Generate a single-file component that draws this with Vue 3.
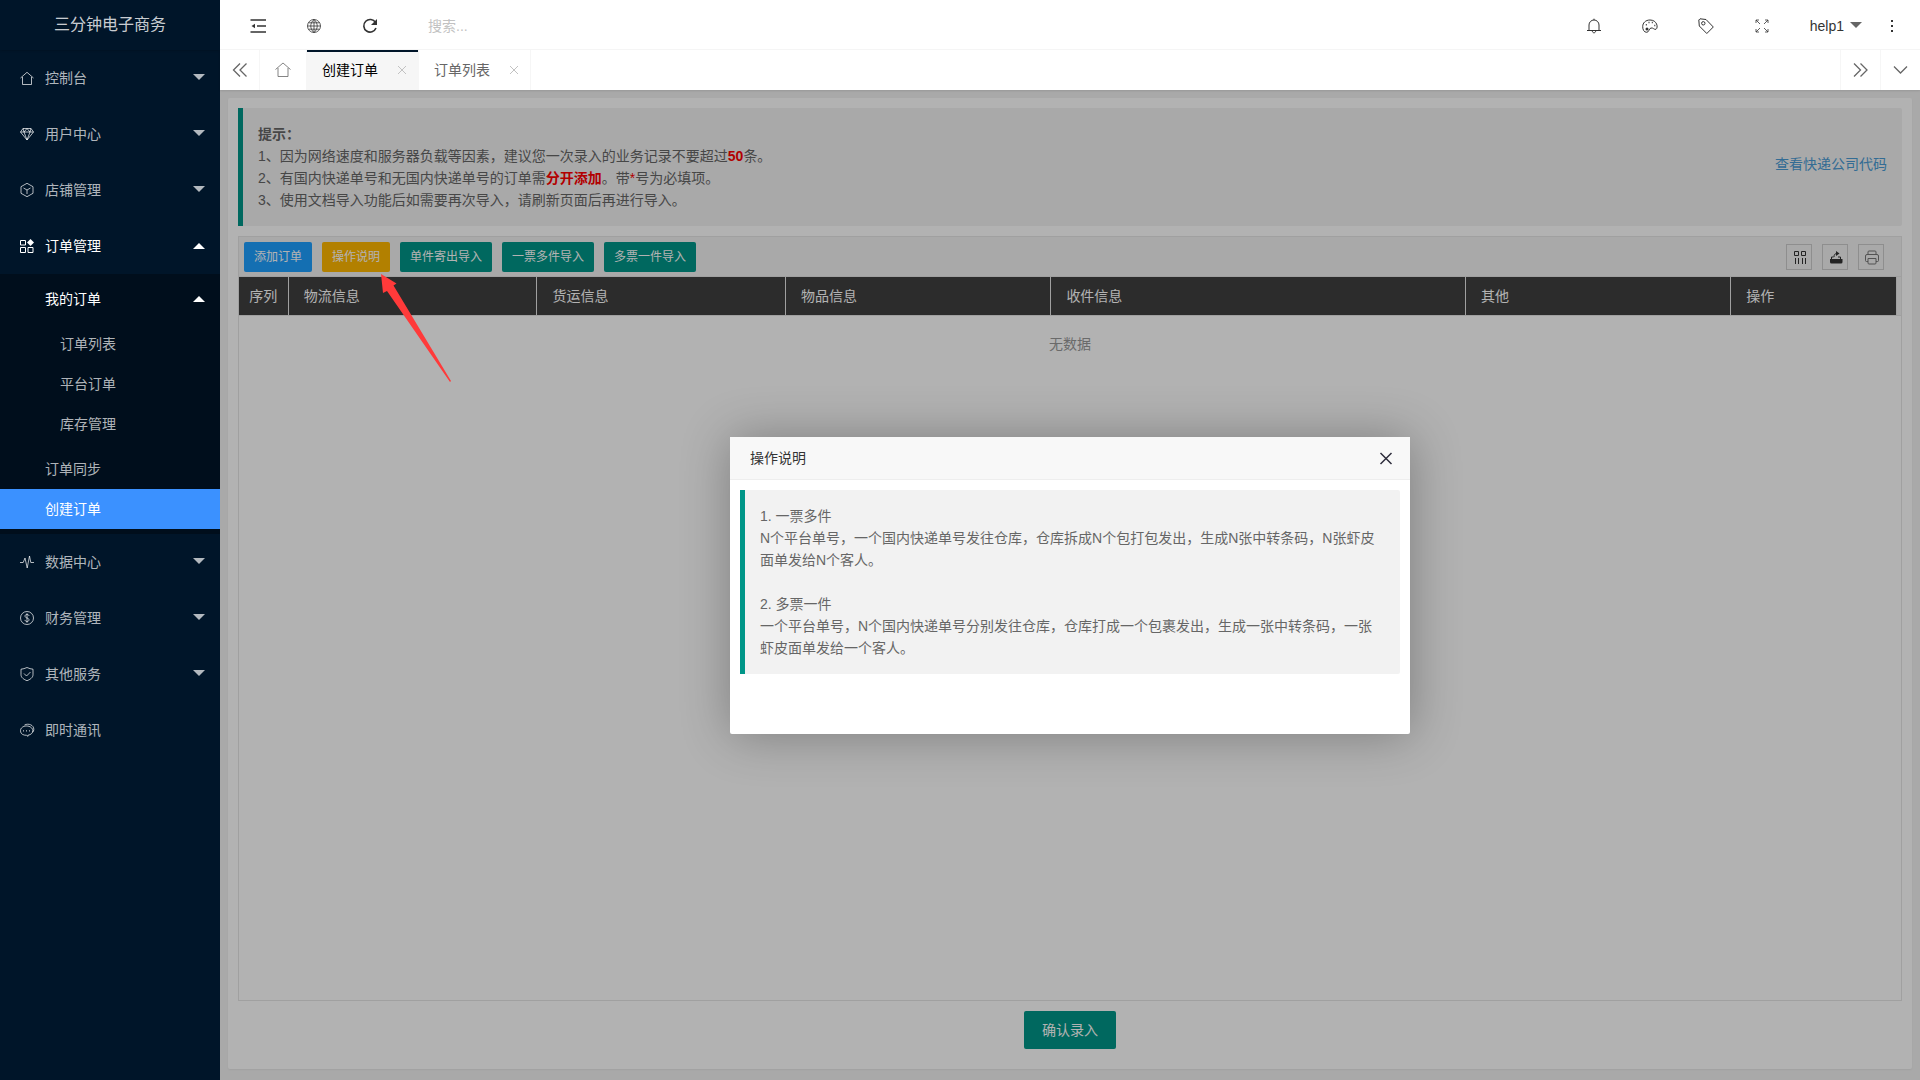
<script setup>
import { ref } from 'vue';

const menu = ref([
  { title: '控制台', icon: 'home', children: true },
  { title: '用户中心', icon: 'diamond', children: true },
  { title: '店铺管理', icon: 'cube', children: true },
  { title: '订单管理', icon: 'apps', children: true, open: true },
  { title: '数据中心', icon: 'pulse', children: true },
  { title: '财务管理', icon: 'dollar', children: true },
  { title: '其他服务', icon: 'shield', children: true },
  { title: '即时通讯', icon: 'chat' },
]);

const orderLinks = ['订单列表', '平台订单', '库存管理'];

const icons = {
  home: 'M1.500 8 8 2.300l6.500 5.700M3.500 7v7.500h9V7',
  diamond: 'M4 2.500h8l2.500 3.500L8 14 1.500 6zM1.500 6h13M5 6l3 8 3-8M4 2.500 5 6l3-3.500L11 6l1-3.500',
  cube: 'M8 1.300 14 4.700v6.600L8 14.700 2 11.300V4.700zM4.500 6 8 8l3.500-2M8 8v4',
  apps: 'M1.500 2.500h5v4.500h-5zM1.500 9.500h5v5h-5zM9 9.500h5v5H9z',
  pulse: 'M1 8.500h3.200L6 4l2.200 10L10.500 2l1.300 6.500H15',
  dollar: 'M8 1.500a6.500 6.500 0 1 0 0 13 6.500 6.500 0 0 0 0-13M10 6c0-1-.8-1.500-2-1.500S6 5 6 6.100 7 7.700 8 8s2 .7 2 1.800-.8 1.700-2 1.700-2-.6-2-1.600M8 3.300v9.400',
  shield: 'M8 1.500c2 1 4 1.500 6 1.700v5.500c0 3-3 4.800-6 6-3-1.200-6-3-6-6V3.200c2-.2 4-.7 6-1.700M5 7.500l2.500 2.500 4-4',
  chat: 'M7.500 4C4 4 1.500 6 1.500 8.700c0 1.700.8 2.900 2 3.700M3.500 12.400c1 .6 2.300.9 4 .9l1.500 1v-1.100c3-.4 4.800-2.200 4.800-4.500C13.800 6 11 4 7.500 4M5.500 3c4-2 9.500 0 9.300 4.500 0 1-.4 2-1.200 2.800M4.500 8.200v1.300M7.500 8.200v1.300M10.500 8.200v1.300',
};

const tabs = [
  { title: '创建订单', active: true },
  { title: '订单列表' },
];

const columns = [
  { title: '序列', width: 3, center: true },
  { title: '物流信息', width: 15 },
  { title: '货运信息', width: 15 },
  { title: '物品信息', width: 16 },
  { title: '收件信息', width: 25 },
  { title: '其他', width: 16 },
  { title: '操作', width: 10 },
];

const showHelp = ref(true);
</script>

<template>
  <div class="layout">
    <aside class="side">
      <div class="logo">三分钟电子商务</div>
      <nav>
        <div v-for="item in menu" :key="item.title" class="item" :class="{ open: item.open }">
          <a href="#" class="item-link">
            <svg class="icon" viewBox="0 0 16 16">
              <path :d="icons[item.icon]" />
              <path v-if="item.icon === 'apps'" class="solid" d="M11.500 1 15 4.500 11.500 8 8 4.500z" />
            </svg>
            <span>{{ item.title }}</span>
            <i v-if="item.children" class="caret" :class="{ up: item.open }"></i>
          </a>
          <div v-if="item.open" class="sub">
            <a href="#" class="sub-link parent">我的订单<i class="caret up"></i></a>
            <div class="third">
              <a v-for="link in orderLinks" :key="link" href="#" class="sub-link">{{ link }}</a>
            </div>
            <a href="#" class="sub-link">订单同步</a>
            <a href="#" class="sub-link current">创建订单</a>
          </div>
        </div>
      </nav>
    </aside>

    <div class="main">
      <header class="header">
        <button class="head-btn" aria-label="menu">
          <svg class="icon bold" viewBox="0 0 16 16">
            <path d="M.5 2H16M7 8h9M.5 14H16" />
            <path class="solid" d="M1.500 8 5 5.800v4.400z" />
          </svg>
        </button>
        <button class="head-btn" aria-label="site">
          <svg class="icon" viewBox="0 0 16 16">
            <path d="M8 1.500a6.500 6.500 0 1 0 0 13 6.500 6.500 0 0 0 0-13M8 1.500v13M1.500 8h13M2.500 4.800h11M2.500 11.200h11M8 1.500c-4.300 3.500-4.300 9.500 0 13M8 1.500c4.300 3.500 4.300 9.500 0 13" stroke-width=".8" />
          </svg>
        </button>
        <button class="head-btn" aria-label="refresh">
          <svg class="icon bold" viewBox="0 0 16 16">
            <path d="M13.500 4.500A6.300 6.300 0 1 0 14 10" />
            <path class="solid" d="M15 1v6H9z" />
          </svg>
        </button>
        <input class="search" type="text" placeholder="搜索..." aria-label="搜索" />
        <div class="spacer"></div>
        <button class="head-btn" aria-label="message">
          <svg class="icon" viewBox="0 0 16 16">
            <path d="M3 12.500V7a5 5 0 0 1 10 0v5.500M1 12.500h14M8 2V.7M6.300 13c.2 2.400 3.200 2.400 3.400 0" />
          </svg>
        </button>
        <button class="head-btn" aria-label="theme">
          <svg class="icon" viewBox="0 0 16 16">
            <path d="M8 2C3.500 2 .7 5 .7 8.500c0 3.300 1.300 5.800 4 5.800 2.500 0 2-3.800 4.300-4.300 2.300-.4 3 1.800 5 1.300C16.500 9.500 15 2 8 2" />
            <path d="M6.500 4.500h1M9.800 4.500h1M12.300 7.500h1M3.800 6.800h1" stroke-width="1.500" />
            <circle class="solid" cx="5" cy="11" r="1.500" />
          </svg>
        </button>
        <button class="head-btn" aria-label="note">
          <svg class="icon" viewBox="0 0 16 16">
            <path d="M.8 2 2 .8l6 .7 7.300 7.500-6.500 6.500L1.300 8z" />
            <circle cx="5.300" cy="5.300" r="1.700" />
          </svg>
        </button>
        <button class="head-btn" aria-label="fullscreen">
          <svg class="icon" viewBox="0 0 16 16">
            <path d="M2 5V2h3M2 2l4 4M11 2h3v3M14 2l-4 4M2 11v3h3M2 14l4-4M14 11v3h-3M14 14l-4-4" stroke-width=".8" />
          </svg>
        </button>
        <button class="user">help1<i class="caret"></i></button>
        <button class="head-btn" aria-label="more">
          <svg class="icon" viewBox="0 0 16 16">
            <path class="solid" d="M7 2h2v2H7zM7 7h2v2H7zM7 12h2v2H7z" />
          </svg>
        </button>
      </header>

      <div class="tabs">
        <button class="tab-ctl left" aria-label="prev">
          <svg class="icon" viewBox="0 0 16 16"><path d="M8 1.500 1.500 8 8 14.500M14.500 1.500 8 8l6.500 6.500" stroke-width="1.300" /></svg>
        </button>
        <a href="#" class="tab-home" aria-label="home">
          <svg class="icon" viewBox="0 0 16 16"><path d="M.5 7.500 8 1l7.500 6.500M3 6v8.500h10V6" stroke-width=".8" /></svg>
        </a>
        <div v-for="tab in tabs" :key="tab.title" class="tab" :class="{ active: tab.active }">
          <a href="#">{{ tab.title }}</a>
          <button class="tab-close" aria-label="close">
            <svg viewBox="0 0 12 12"><path d="m2 2 8 8M10 2l-8 8" /></svg>
          </button>
        </div>
        <div class="spacer"></div>
        <button class="tab-ctl" aria-label="next">
          <svg class="icon" viewBox="0 0 16 16"><path d="M1 1.500 7.500 8 1 14.500M7.500 1.500 14 8l-6.500 6.500" stroke-width="1.300" /></svg>
        </button>
        <button class="tab-ctl" aria-label="tabs">
          <svg class="icon" viewBox="0 0 16 16"><path d="M1 4.500 7.500 11 14 4.500" stroke-width="1.300" /></svg>
        </button>
      </div>

      <main class="body">
        <div class="card">
          <blockquote class="quote tips">
            <div>
              <b>提示：</b><br />
              1、因为网络速度和服务器负载等因素，建议您一次录入的业务记录不要超过<b class="red">50</b>条。<br />
              2、有国内快递单号和无国内快递单号的订单需<b class="red">分开添加</b>。带<span class="red">*</span>号为必填项。<br />
              3、使用文档导入功能后如需要再次导入，请刷新页面后再进行导入。
            </div>
            <a href="#" class="codes">查看快递公司代码</a>
          </blockquote>

          <div class="table-view">
            <div class="toolbar">
              <button class="btn blue">添加订单</button>
              <button class="btn orange" @click="showHelp = true">操作说明</button>
              <button class="btn">单件寄出导入</button>
              <button class="btn">一票多件导入</button>
              <button class="btn">多票一件导入</button>
              <div class="tools">
                <button class="tool" aria-label="columns">
                  <svg class="icon" viewBox="0 0 16 16">
                    <path d="M3.500 2.500h4v4h-4zM10.500 2.500h4v4h-4zM4.500 9v6M7.500 9v6M11.500 9v6M14.500 9v6" />
                  </svg>
                </button>
                <button class="tool" aria-label="export">
                  <svg class="icon" viewBox="0 0 16 16">
                    <path class="solid" d="M3 10h12.500v3q0 1.500-1.500 1.500H4.500Q3 14.500 3 13z" />
                    <path d="M4.500 10V8h2M13.500 10V8H11M7 8c0-2.500 1-3.500 3-3.500" />
                    <path class="solid" d="M9 2 12.500 4.500 9 7z" />
                  </svg>
                </button>
                <button class="tool" aria-label="print">
                  <svg class="icon print" viewBox="0 0 16 16">
                    <path d="M5 5.500V3q0-1 1-1h6q1 0 1 1v2.500M5 12.500H3.500Q2.500 12.500 2.500 11.500V7Q2.500 5.500 4 5.500h10q1.500 0 1.500 1.500v4.500q0 1-1 1H13M5 9.500h8V14q0 1-1 1H6q-1 0-1-1z" />
                  </svg>
                </button>
              </div>
            </div>
            <div class="table-head">
              <table>
                <colgroup>
                  <col v-for="col in columns" :key="col.title" :style="{ width: col.width + '%' }" />
                </colgroup>
                <thead>
                  <tr>
                    <th v-for="col in columns" :key="col.title" :class="{ center: col.center }">{{ col.title }}</th>
                  </tr>
                </thead>
              </table>
            </div>
            <div class="empty">无数据</div>
          </div>

          <button class="btn submit">确认录入</button>
        </div>

        <div v-if="showHelp" class="shade">
          <section class="dialog" role="dialog" aria-label="操作说明">
            <div class="dialog-title">
              <span>操作说明</span>
              <button aria-label="close" @click="showHelp = false">
                <svg viewBox="0 0 16 16"><path d="m2.500 3 11 11M13.500 3l-11 11" /></svg>
              </button>
            </div>
            <blockquote class="quote">
              1. 一票多件<br />
              N个平台单号，一个国内快递单号发往仓库，仓库拆成N个包打包发出，生成N张中转条码，N张虾皮面单发给N个客人。<br />
              <br />
              2. 多票一件<br />
              一个平台单号，N个国内快递单号分别发往仓库，仓库打成一个包裹发出，生成一张中转条码，一张虾皮面单发给一个客人。
            </blockquote>
          </section>
        </div>
        <!-- arrow pointing at the 操作说明 button -->
        <svg class="arrow" viewBox="0 0 70 108">
          <path d="M0 0 15.500 9.500 12.500 11.500 70 107 69 108 6 17 2 19z" />
        </svg>
      </main>
    </div>
  </div>
</template>

<style>
body {
  margin: 0;
}
</style>

<style scoped>
.layout {
  display: flex;
  min-height: 100vh;
  font: 14px/22px "Liberation Sans", "Noto Sans CJK SC", sans-serif;
  color: #666;
  background: #f2f2f2;
}

.layout * {
  box-sizing: border-box;
}

a {
  color: inherit;
  text-decoration: none;
}

button {
  font: inherit;
  color: inherit;
  border: none;
  padding: 0;
  background: none;
  cursor: pointer;
}

svg {
  display: block;
  fill: none;
  stroke: currentColor;
}

.icon {
  width: 16px;
  height: 16px;

  .solid {
    fill: currentColor;
    stroke: none;
  }

  &.bold {
    stroke-width: 1.6;
  }
}

.spacer {
  flex: 1;
}

.caret {
  border: 6px solid transparent;
  border-top-color: currentColor;
  border-bottom: none;

  &.up {
    border-top: none;
    border-bottom: 6px solid currentColor;
  }
}

.side {
  flex: 0 0 220px;
  background: #001529;
  color: rgba(255, 255, 255, 0.7);
}

.logo {
  height: 50px;
  line-height: 50px;
  font-size: 16px;
  text-align: center;
  color: rgba(255, 255, 255, 0.8);
  box-shadow: 0 1px 2px rgba(0, 0, 0, 0.15);
}

.item-link {
  display: flex;
  align-items: center;
  height: 56px;
  padding: 0 15px 0 19px;

  .icon {
    margin-right: 10px;
  }

  .caret {
    margin-left: auto;
    margin-bottom: 2px;
  }

  .caret.up {
    margin-bottom: 0;
  }
}

.open > .item-link {
  color: #fff;
}

.sub {
  padding: 5px 0;
  background: rgba(0, 0, 0, 0.3);
}

.sub-link {
  display: flex;
  align-items: center;
  justify-content: space-between;
  height: 40px;
  padding: 0 15px 0 45px;

  &.parent {
    color: #fff;
  }

  &.current {
    color: #fff;
    background: #3b91ff;
  }
}

.third {
  padding: 5px 0;

  .sub-link {
    padding-left: 60px;
  }
}

.main {
  flex: 1;
  min-width: 0;
  display: flex;
  flex-direction: column;
}

.header {
  display: flex;
  align-items: center;
  height: 50px;
  padding: 2px 0 0 10px;
  background: #fff;
  color: #333;
  border-bottom: 1px solid #f6f6f6;
}

.head-btn {
  display: grid;
  place-items: center;
  width: 56px;
  height: 46px;
}

.search {
  width: 220px;
  margin-left: 30px;
  padding: 0;
  border: none;
  outline: none;
  font: inherit;

  &::placeholder {
    color: #c2c2c2;
  }
}

.user {
  display: flex;
  align-items: center;
  gap: 6px;
  padding: 0 2px 0 20px;

  .caret {
    margin-bottom: 2px;
    color: #666;
  }
}

.tabs {
  display: flex;
  height: 40px;
  background: #fff;
  box-shadow: 0 1px 2px rgba(0, 0, 0, 0.1);
}

.tab-ctl {
  display: grid;
  place-items: center;
  width: 40px;
  border-left: 1px solid #f6f6f6;

  &.left {
    border-left: none;
    border-right: 1px solid #f6f6f6;
  }
}

.tab-home {
  display: grid;
  place-items: center;
  width: 47px;
  border-right: 1px solid #f6f6f6;
}

.tab {
  display: flex;
  align-items: center;
  gap: 18px;
  padding: 0 10px 0 15px;
  border-right: 1px solid #f6f6f6;

  &.active {
    color: #000;
    background: #f6f6f6;
    box-shadow: inset 0 2px #001529;
  }
}

.tab-close svg {
  width: 12px;
  height: 12px;
  color: #c2c2c2;
}

.body {
  position: relative;
  flex: 1;
  display: flex;
  flex-direction: column;
  padding: 8px 8px 11px;
}

.card {
  flex: 1;
  display: flex;
  flex-direction: column;
  gap: 10px;
  padding: 10px 10px 20px;
  background: #fff;
  border-radius: 2px;
  box-shadow: 0 1px 2px rgba(0, 0, 0, 0.05);
}

.quote {
  margin: 0;
  padding: 15px;
  border-left: 5px solid #009688;
  border-radius: 0 2px 2px 0;
  background: #f2f2f2;
}

.tips {
  display: flex;
  justify-content: space-between;
}

.red {
  color: #f00;
}

.codes {
  padding-top: 30px;
  color: #4a9bd4;
}

.table-view {
  flex: 1;
  border: 1px solid #e6e6e6;
}

.toolbar {
  display: flex;
  align-items: center;
  gap: 10px;
  height: 40px;
  padding: 0 17px 0 5px;
  background: #f2f2f2;
  border-bottom: 1px solid #e6e6e6;
}

.btn {
  height: 30px;
  padding: 0 10px;
  border-radius: 2px;
  font-size: 12px;
  color: #fff;
  background: #009688;

  &.blue {
    background: #1e9fff;
  }

  &.orange {
    background: #ffb800;
  }

  &.submit {
    align-self: center;
    height: 38px;
    padding: 0 18px;
    font-size: 14px;
  }
}

.tools {
  display: flex;
  gap: 10px;
  margin-left: auto;
}

.tool {
  display: grid;
  place-items: center;
  width: 26px;
  height: 26px;
  border: 1px solid #ccc;
  color: #333;

  .print {
    color: #777;
  }
}

.table-head {
  padding-right: 4px;
  background: #f2f2f2;
  border-bottom: 1px solid #e6e6e6;
}

table {
  width: 100%;
  table-layout: fixed;
  border-collapse: separate;
  border-spacing: 0;
}

th {
  height: 38px;
  padding: 0 15px;
  border-right: 1px solid #e6e6e6;
  font-weight: 400;
  text-align: left;
  color: #fff;
  background: #3f3f3f;

  &.center {
    padding: 0;
    text-align: center;
  }
}

.empty {
  padding: 17px 15px;
  text-align: center;
  color: #999;
}

.shade {
  position: absolute;
  inset: 0;
  display: grid;
  place-items: center;
  background: rgba(0, 0, 0, 0.3);
}

.dialog {
  width: 680px;
  max-width: 90%;
  padding-bottom: 60px;
  background: #fff;
  border-radius: 2px;
  box-shadow: 1px 1px 50px rgba(0, 0, 0, 0.3);

  .quote {
    margin: 10px 10px 0;
  }
}

.dialog-title {
  display: flex;
  align-items: center;
  justify-content: space-between;
  height: 43px;
  padding: 0 16px 0 20px;
  color: #333;
  background: #f8f8f8;
  border-bottom: 1px solid #eee;

  svg {
    width: 16px;
    height: 16px;
    color: #2d2c3b;
    stroke-width: 1.5;
  }
}

.arrow {
  position: absolute;
  left: 161px;
  top: 184px;
  width: 70px;
  height: 108px;
  fill: #ff3a3a;
  stroke: none;
  pointer-events: none;
}
</style>
